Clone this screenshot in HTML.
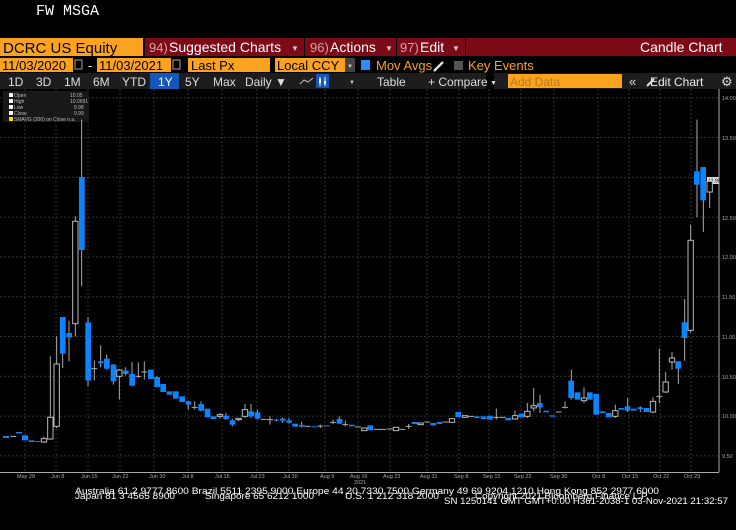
<!DOCTYPE html>
<html><head><meta charset="utf-8"><style>
html,body{margin:0;padding:0;background:#000;width:736px;height:530px;overflow:hidden}
svg{display:block}
text{font-family:"Liberation Sans",sans-serif}
</style></head><body>
<svg width="736" height="530" viewBox="0 0 736 530" xmlns="http://www.w3.org/2000/svg">
<rect width="736" height="530" fill="#000"/>
<text x="36" y="15" fill="#fff" font-size="15" style="font-family:'Liberation Mono',monospace">FW MSGA</text>
<!-- row1 -->
<rect x="0" y="38" width="143" height="18" fill="#fba31f"/>
<text x="3" y="53" font-size="15" fill="#000">DCRC US Equity</text>
<rect x="145" y="38" width="591" height="18" fill="#7d0a17"/>
<rect x="304" y="38" width="1" height="18" fill="#000"/>
<rect x="396" y="38" width="1" height="18" fill="#000"/>
<rect x="465" y="38" width="1" height="18" fill="#000"/>
<text x="149" y="52" font-size="13" fill="#d9a0a6">94)</text><text x="169" y="52" font-size="14" fill="#fff">Suggested Charts</text><text x="291" y="51" font-size="8" fill="#ccc">▼</text>
<text x="310" y="52" font-size="13" fill="#d9a0a6">96)</text><text x="330" y="52" font-size="14" fill="#fff">Actions</text><text x="385" y="51" font-size="8" fill="#ccc">▼</text>
<text x="400" y="52" font-size="13" fill="#d9a0a6">97)</text><text x="420" y="52" font-size="14" fill="#fff">Edit</text><text x="452" y="51" font-size="8" fill="#ccc">▼</text>
<text x="640" y="52" font-size="14" fill="#fff">Candle Chart</text>
<!-- row2 -->
<rect x="0" y="58" width="73" height="14" fill="#fba31f"/><text x="2" y="70" font-size="13" fill="#000">11/03/2020</text>
<rect x="75" y="60" width="7" height="9" fill="none" stroke="#888" stroke-width="1.2"/>
<text x="88" y="70" font-size="13" fill="#fff">-</text>
<rect x="97" y="58" width="74" height="14" fill="#fba31f"/><text x="99" y="70" font-size="13" fill="#000">11/03/2021</text>
<rect x="173" y="60" width="7" height="9" fill="none" stroke="#888" stroke-width="1.2"/>
<rect x="188" y="58" width="82" height="14" fill="#fba31f"/><text x="191" y="70" font-size="13" fill="#000">Last Px</text>
<rect x="275" y="58" width="70" height="14" fill="#fba31f"/><text x="277" y="70" font-size="13" fill="#000">Local CCY</text>
<rect x="345" y="58" width="10" height="14" fill="#444"/><text x="347" y="68" font-size="6" fill="#ccc">▼</text>
<rect x="361" y="60" width="9" height="10" fill="#2a8cff"/>
<text x="376" y="70" font-size="13" fill="#fba31f">Mov Avgs</text>
<path d="M434 71 L443 62" stroke="#ddd" stroke-width="2.5"/>
<rect x="454" y="61" width="9" height="9" fill="#555"/>
<text x="468" y="70" font-size="13" fill="#fba31f">Key Events</text>
<!-- row3 -->
<rect x="0" y="73" width="736" height="16" fill="#1d1d1d"/>
<rect x="150" y="73" width="29" height="16" fill="#1557b8"/>
<rect x="486" y="73" width="8" height="16" fill="#000"/>
<g font-size="12" fill="#ddd">
<text x="8" y="86">1D</text><text x="36" y="86">3D</text><text x="64" y="86">1M</text><text x="93" y="86">6M</text><text x="122" y="86">YTD</text><text x="158" y="86" fill="#fff">1Y</text><text x="185" y="86">5Y</text><text x="213" y="86">Max</text><text x="245" y="86">Daily ▼</text>
<text x="377" y="86">Table</text><text x="428" y="86">+ Compare</text><text x="490" y="85" font-size="7">▼</text>
<text x="650" y="86" fill="#eee">Edit Chart</text></g>
<path d="M300 84 L304 80 L308 82 L313 78" stroke="#bbb" fill="none"/>
<rect x="316" y="74" width="13" height="14" fill="#1557b8"/><path d="M320 77v9M325 77v9" stroke="#fff"/><rect x="319" y="79" width="2" height="4" fill="#fff"/><rect x="324" y="81" width="2" height="3" fill="#fff"/>
<text x="349" y="84" font-size="6" fill="#ccc">▼</text>
<rect x="508" y="74" width="114" height="14" fill="#fba31f"/><text x="510" y="86" font-size="12" fill="#b57a20">Add Data</text>
<text x="629" y="86" font-size="13" fill="#ddd">«</text>
<path d="M647 86 L654 79" stroke="#ddd" stroke-width="2"/>
<text x="721" y="86" font-size="13" fill="#ddd">⚙</text>
<!-- grid -->
<g stroke="#333" stroke-width="1" stroke-dasharray="2,2">
<path d="M0 97.7H719M0 137.5H719M0 177.3H719M0 217.1H719M0 256.9H719M0 296.7H719M0 336.5H719M0 376.3H719M0 416.1H719M0 455.9H719"/>
<path d="M25 89V472M56 89V472M88 89V472M120 89V472M154 89V472M188 89V472M222 89V472M257 89V472M289 89V472M325 89V472M358 89V472M390 89V472M427 89V472M459 89V472M489 89V472M521 89V472M554 89V472M598 89V472M629 89V472M660 89V472M691 89V472"/>
</g>
<path d="M719 89V472M0 472.5H719" stroke="#aaa" stroke-width="1"/>
<g font-size="5.5" fill="#aaa">
<text x="722" y="100">14.00</text><text x="722" y="140">13.50</text><text x="722" y="220">12.50</text><text x="722" y="259">12.00</text><text x="722" y="299">11.50</text><text x="722" y="339">11.00</text><text x="722" y="379">10.50</text><text x="722" y="418">10.00</text><text x="722" y="458">9.50</text>
<text x="17" y="478">May 28</text><text x="51" y="478">Jun 8</text><text x="81" y="478">Jun 15</text><text x="112" y="478">Jun 22</text><text x="149" y="478">Jun 30</text><text x="182" y="478">Jul 8</text><text x="215" y="478">Jul 15</text><text x="250" y="478">Jul 23</text><text x="283" y="478">Jul 30</text><text x="320" y="478">Aug 9</text><text x="350" y="478">Aug 16</text><text x="354" y="484">2021</text><text x="383" y="478">Aug 23</text><text x="420" y="478">Aug 31</text><text x="454" y="478">Sep 8</text><text x="483" y="478">Sep 15</text><text x="514" y="478">Sep 22</text><text x="550" y="478">Sep 30</text><text x="592" y="478">Oct 8</text><text x="622" y="478">Oct 15</text><text x="653" y="478">Oct 22</text><text x="684" y="478">Oct 29</text>
</g>
<rect x="707" y="177" width="12" height="7" fill="#ddd"/><text x="708" y="182.5" font-size="5" fill="#000">12.95</text>
<!-- legend -->
<rect x="3" y="91" width="86" height="31" fill="#181818"/>
<g font-size="5" fill="#bbb"><rect x="9" y="93" width="4" height="4" fill="#fff"/><text x="14" y="97">Open</text><text x="70" y="97">10.05</text>
<rect x="9" y="99" width="4" height="4" fill="#fff"/><text x="14" y="103">High</text><text x="70" y="103">10.0691</text>
<rect x="9" y="105" width="4" height="4" fill="#fff"/><text x="14" y="109">Low</text><text x="74" y="109">9.98</text>
<rect x="9" y="111" width="4" height="4" fill="#fff"/><text x="14" y="115">Close</text><text x="74" y="115">9.99</text>
<rect x="9" y="117" width="4" height="4" fill="#ffd800"/><text x="14" y="121">SMAVG (200)  on Close n.a.</text></g>
<!-- candles left (zoom coords) -->
<g transform="translate(0,88) scale(0.33333)" stroke-width="3">
<g stroke="#aaa">
<path d="M132 1045V1065M151 805V1055M170 745V1020M188 687V840M207 698V820M226 385V745M245 95V595M264 687V895M283 818V877M302 772V838M320 800V845M340 828V890M358 843V935M377 838V862M396 822V895M415 823V870M433 820V875M471 865V898M565 938V965M584 940V965M603 940V970M660 975V992M678 975V995M697 993V1015M716 990V1000M735 948V990M753 948V990M772 965V995M810 985V1010M829 993V1000M848 988V1005M867 990V1007M905 1002V1018M961 1010V1020M999 995V1008M1018 985V1008M1036 998V1015"/>
<path d="M31 1045H49M406 865H424M424 852H442M782 994H800M801 995H819M914 1015H932M952 1014H970M990 1003H1008M1027 1010H1045M1065 1017H1083M274 842H292M575 958H593"/>
</g>
<g fill="#000" stroke="#bbb">
<rect x="124" y="1052" width="16" height="10"/><rect x="143" y="988" width="16" height="65"/><rect x="162" y="828" width="16" height="187"/><rect x="218" y="400" width="16" height="307"/><rect x="350" y="846" width="16" height="19"/><rect x="652" y="980" width="16" height="5"/><rect x="708" y="991" width="16" height="4"/><rect x="727" y="965" width="16" height="20"/><rect x="1085" y="1020" width="16" height="8"/>
</g>
<g fill="#0a84ff">
<rect x="9" y="1044" width="18" height="6"/><rect x="48" y="1032" width="18" height="4"/><rect x="66" y="1042" width="18" height="15"/><rect x="86" y="1057" width="18" height="5"/><rect x="106" y="1059" width="18" height="3"/>
<rect x="180" y="687" width="17" height="110"/><rect x="199" y="735" width="17" height="13"/><rect x="237" y="267" width="17" height="219"/><rect x="256" y="703" width="17" height="175"/><rect x="294" y="820" width="17" height="5"/><rect x="312" y="812" width="17" height="30"/><rect x="332" y="830" width="17" height="50"/><rect x="369" y="848" width="17" height="10"/><rect x="388" y="858" width="17" height="35"/>
<rect x="444" y="845" width="17" height="28"/><rect x="463" y="867" width="17" height="30"/><rect x="481" y="888" width="17" height="24"/><rect x="500" y="910" width="17" height="10"/><rect x="519" y="910" width="17" height="22"/><rect x="538" y="925" width="17" height="17"/><rect x="557" y="940" width="17" height="10"/><rect x="595" y="948" width="17" height="20"/><rect x="614" y="962" width="17" height="26"/><rect x="632" y="985" width="17" height="8"/><rect x="670" y="983" width="17" height="10"/><rect x="689" y="997" width="17" height="13"/><rect x="745" y="970" width="17" height="15"/><rect x="764" y="973" width="17" height="19"/><rect x="821" y="995" width="17" height="3"/><rect x="840" y="992" width="17" height="6"/><rect x="859" y="997" width="17" height="7"/><rect x="877" y="1007" width="17" height="9"/><rect x="897" y="1011" width="17" height="5"/><rect x="934" y="1015" width="17" height="3"/><rect x="972" y="1012" width="17" height="3"/><rect x="1010" y="993" width="17" height="14"/><rect x="1047" y="1010" width="17" height="5"/>
</g>
</g>
<!-- candles right -->
<g transform="translate(368,88) scale(0.33333)" stroke-width="3">
<g stroke="#aaa">
<path d="M122 1008V1023M385 962V995M441 968V995M478 945V990M497 900V970M516 920V975M591 940V962M610 845V935M648 898V945M855 928V975M874 782V945M893 852V915M912 792V845M931 820V888M950 633V818M968 410V735M987 95V388M1006 237V432M1025 275V360M742 950V990M779 930V972M817 955V972"/>
<path d="M18 1024H36M36 1024H54M56 1023H74M94 1024H112M113 1015H131M169 1002H187M224 1002H242M300 985H318M376 988H394M395 988H413M563 972H581M582 958H600M865 925H883"/>
</g>
<g fill="#000" stroke="#bbb">
<rect x="76" y="1018" width="16" height="10"/><rect x="150" y="1005" width="16" height="5"/><rect x="244" y="992" width="16" height="11"/><rect x="283" y="983" width="16" height="5"/><rect x="433" y="983" width="16" height="10"/><rect x="470" y="970" width="16" height="15"/><rect x="489" y="953" width="16" height="7"/><rect x="640" y="930" width="16" height="8"/><rect x="734" y="968" width="16" height="17"/><rect x="847" y="940" width="16" height="32"/><rect x="885" y="882" width="16" height="30"/><rect x="904" y="810" width="16" height="12"/><rect x="960" y="457" width="16" height="270"/><rect x="1017" y="280" width="16" height="32"/>
</g>
<g fill="#0a84ff">
<rect x="-2" y="1012" width="17" height="15"/><rect x="131" y="1002" width="17" height="6"/><rect x="187" y="1005" width="17" height="7"/><rect x="206" y="1002" width="17" height="6"/><rect x="262" y="972" width="17" height="15"/><rect x="318" y="985" width="17" height="5"/><rect x="338" y="985" width="17" height="8"/><rect x="357" y="983" width="17" height="12"/><rect x="412" y="990" width="17" height="7"/><rect x="451" y="977" width="17" height="11"/><rect x="507" y="945" width="17" height="13"/><rect x="526" y="968" width="17" height="5"/><rect x="545" y="982" width="17" height="4"/><rect x="601" y="878" width="17" height="52"/><rect x="620" y="913" width="17" height="22"/><rect x="657" y="913" width="17" height="22"/><rect x="676" y="918" width="17" height="62"/><rect x="696" y="970" width="17" height="5"/><rect x="714" y="975" width="17" height="13"/><rect x="751" y="960" width="17" height="5"/><rect x="770" y="955" width="17" height="13"/><rect x="789" y="962" width="17" height="6"/><rect x="808" y="958" width="17" height="5"/><rect x="827" y="960" width="17" height="12"/><rect x="922" y="820" width="17" height="22"/><rect x="941" y="703" width="17" height="47"/><rect x="978" y="250" width="17" height="40"/><rect x="997" y="237" width="17" height="100"/>
</g>
</g>
<!-- footer -->
<g fill="#fff" font-size="9" style="font-family:'Liberation Mono',monospace">
<text x="75" y="494" textLength="584" lengthAdjust="spacingAndGlyphs">Australia 61 2 9777 8600 Brazil 5511 2395 9000 Europe 44 20 7330 7500 Germany 49 69 9204 1210 Hong Kong 852 2977 6000</text>
<text x="75" y="499" textLength="100" lengthAdjust="spacingAndGlyphs">Japan 81 3 4565 8900</text>
<text x="205" y="499" textLength="109" lengthAdjust="spacingAndGlyphs">Singapore 65 6212 1000</text>
<text x="345" y="499" textLength="94" lengthAdjust="spacingAndGlyphs">U.S. 1 212 318 2000</text>
<text x="475" y="499" textLength="174" lengthAdjust="spacingAndGlyphs">Copyright 2021 Bloomberg Finance L.P.</text>
<text x="444" y="504" textLength="284" lengthAdjust="spacingAndGlyphs">SN 1250141 GMT  GMT+0:00 H361-2038-1 03-Nov-2021 21:32:57</text>
</g>
</svg>
</body></html>
